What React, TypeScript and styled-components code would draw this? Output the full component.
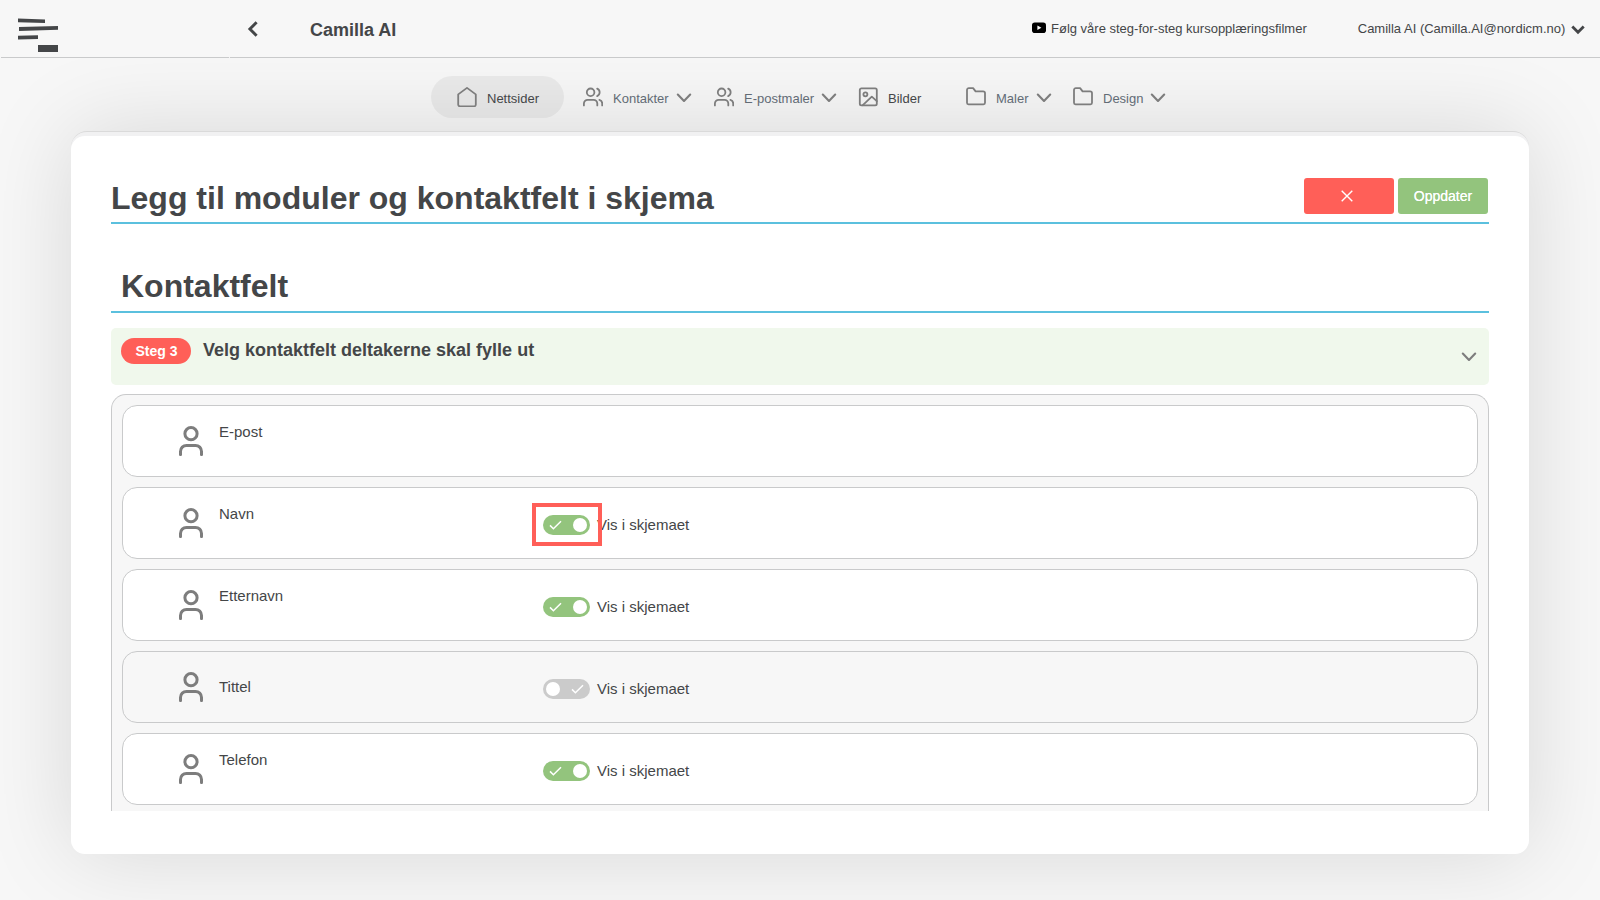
import React from "react";
import styled, { createGlobalStyle } from "styled-components";

const Global = createGlobalStyle`
  * { box-sizing: border-box; }
  body {
    margin: 0;
    background: #f7f7f7;
    color: #444648;
    font-family: "Liberation Sans", Arial, sans-serif;
    overflow: hidden;
  }
`;

const Page = styled.div`
  display: flex;
  flex-direction: column;
  width: 1600px;
  height: 900px;
  overflow: hidden;
`;

const Header = styled.header`
  display: flex;
  align-items: center;
  height: 58px;
  flex: none;
  padding-bottom: 1px;
  background: linear-gradient(90deg, #f7f7f7 1px, #c9cacb 1px 229px, #f1f1f1 229px 230px, #c9cacb 230px) bottom / 100% 1px
    no-repeat, #f7f7f7;
  z-index: 1;
`;

const Logo = styled.svg`
  width: 44px;
  height: 40px;
  margin: 14px 0 0 16px;
  align-self: flex-start;
`;

const Back = styled.svg`
  width: 12px;
  height: 18px;
  margin: 1px 0 0 187px;
`;

const Account = styled.h2`
  margin: 3px 0 0 51px;
  width: 723px;
  font-size: 18px;
  line-height: 22px;
  font-weight: 700;
`;

const TopLink = styled.a<{ $left?: number }>`
  display: flex;
  align-items: center;
  margin-left: ${(p) => p.$left ?? 0}px;
  font-size: 13px;
  line-height: 16px;
  white-space: nowrap;
`;

const Video = styled.svg`
  width: 14px;
  height: 12px;
  margin: -1px 5px 0 -1px;
`;

const AccountArrow = styled.svg`
  width: 14px;
  height: 10px;
  margin: 2px 0 0 6px;
`;

const Nav = styled.nav`
  display: flex;
  height: 42px;
  flex: none;
  margin: 18px 0 13px 431px;
  z-index: 1;
`;

const NavItem = styled.a<{ $width: number; $active?: boolean; $muted?: boolean }>`
  display: flex;
  align-items: center;
  width: ${(p) => p.$width}px;
  height: 42px;
  padding-left: ${(p) => (p.$active ? 26 : 0)}px;
  margin-right: ${(p) => (p.$active ? 19 : 0)}px;
  border-radius: 21px;
  background: ${(p) => (p.$active ? "rgba(0,0,0,.05)" : "transparent")};
  color: ${(p) => (p.$muted ? "#626b75" : "#444648")};
  font-size: 13px;
  line-height: 16px;
  white-space: nowrap;
`;

const NavIcon = styled.svg`
  width: 20px;
  height: 20px;
  margin-right: 10px;
  flex: none;
  fill: none;
  stroke: #7d7d7d;
  stroke-width: 1.8;
  stroke-linecap: round;
  stroke-linejoin: round;
`;

const NavLabel = styled.span`
  padding-top: 3px;
`;

const Chevron = styled.svg`
  width: 16px;
  height: 10px;
  fill: none;
  stroke: #7d7d7d;
  stroke-width: 2.1;
  stroke-linecap: round;
  stroke-linejoin: round;
`;

const NavChevron = styled(Chevron)`
  margin: 2px 0 0 7px;
`;

const Backing = styled.div`
  margin: 0 71px;
  height: 723px;
  flex: none;
  padding-top: 4px;
  border-top: 1px solid #dadada;
  border-radius: 16px;
  background: #f1f1f2;
  box-shadow: 0 0 90px rgba(0, 0, 0, 0.13);
`;

const Card = styled.main`
  height: 718px;
  padding: 42px 40px 0;
  background: #fff;
  border-radius: 14px;
`;

const TitleBar = styled.div`
  display: flex;
  justify-content: space-between;
  height: 46px;
  border-bottom: 2px solid #5bc0de;
`;

const Title = styled.h1`
  margin: 0;
  padding-top: 1px;
  font-size: 32px;
  line-height: 38px;
  font-weight: 700;
`;

const Actions = styled.div`
  display: flex;
  gap: 4px;
  padding-right: 1px;
`;

const Button = styled.button<{ $color: string }>`
  display: flex;
  align-items: center;
  justify-content: center;
  width: 90px;
  height: 36px;
  padding: 0;
  border: 0;
  border-radius: 3px;
  background: ${(p) => p.$color};
  color: #fff;
  font: 14px/18px "Liberation Sans", Arial, sans-serif;
  text-shadow: 0 0 0.6px #fff;
`;

const Cross = styled.svg`
  width: 12px;
  height: 12px;
  margin: -1px 5px 0 0;
`;

const SectionTitle = styled.h1`
  margin: 42px 0 15px;
  height: 47px;
  padding: 1px 10px 0;
  border-bottom: 2px solid #5bc0de;
  font-size: 32px;
  line-height: 38px;
  font-weight: 700;
`;

const Step = styled.section`
  display: flex;
  align-items: flex-start;
  height: 57px;
  margin-bottom: 9px;
  padding: 10px 12px 0 10px;
  border-radius: 5px;
  background: #f0f8ec;
`;

const Badge = styled.span`
  width: 70px;
  height: 26px;
  margin-right: 12px;
  padding-left: 1px;
  border-radius: 13px;
  background: #ff5f58;
  color: #fff;
  font-size: 14px;
  line-height: 27px;
  font-weight: 700;
  text-align: center;
`;

const StepTitle = styled.h3`
  flex: 1;
  margin: 1px 0 0;
  font-size: 18px;
  line-height: 22px;
  font-weight: 700;
`;

const StepChevron = styled(Chevron)`
  margin-top: 14px;
`;

const List = styled.div`
  display: flex;
  flex-direction: column;
  gap: 10px;
  height: 417px;
  overflow: hidden;
  padding: 10px 10px 0;
  border: 1px solid #c9cacb;
  border-bottom: 0;
  border-radius: 15px 15px 0 0;
  background: #f7f7f7;
`;

const Row = styled.div<{ $off?: boolean }>`
  display: flex;
  height: 72px;
  flex: none;
  padding-left: 56px;
  border: 1px solid #c9cacb;
  border-radius: 15px;
  background: ${(p) => (p.$off ? "#f7f7f7" : "#fff")};
  font-size: 15px;
  line-height: 18px;
`;

const Person = styled.svg`
  width: 24px;
  height: 30px;
  margin: 20px 16px 0 0;
  fill: none;
  stroke: #7d7d7d;
  stroke-width: 3;
  stroke-linecap: round;
`;

const FieldName = styled.span<{ $off?: boolean }>`
  width: 324px;
  padding-top: ${(p) => (p.$off ? 26 : 17)}px;
`;

const Visibility = styled.label`
  position: relative;
  display: flex;
  align-items: center;
  gap: 7px;
  height: 20px;
  margin-top: 27px;
`;

const Track = styled.span<{ $on: boolean }>`
  display: flex;
  flex-direction: ${(p) => (p.$on ? "row" : "row-reverse")};
  align-items: center;
  justify-content: space-between;
  width: 47px;
  height: 20px;
  padding: ${(p) => (p.$on ? "0 3px 0 6px" : "0 6px 0 3px")};
  border-radius: 10px;
  background: ${(p) => (p.$on ? "#93c47d" : "#cbcbcb")};
`;

const Knob = styled.span`
  width: 14px;
  height: 14px;
  border-radius: 50%;
  background: #fff;
`;

const Tick = styled.svg`
  width: 13px;
  height: 10px;
`;

const Highlight = styled.span`
  position: absolute;
  left: -11px;
  top: -12px;
  width: 70px;
  height: 43px;
  border: 4px solid #ff5f58;
`;

const icons: Record<string, React.ReactNode> = {
  home: <path d="M1.2 7.4 10 .9l8.8 6.5v10.2a1.7 1.7 0 0 1-1.7 1.7H2.9a1.7 1.7 0 0 1-1.7-1.7z" />,
  users: (
    <>
      <circle cx="7.6" cy="5.3" r="3.8" />
      <path d="M.9 18.4v-1.8a3.8 3.8 0 0 1 3.8-3.8h5.8a3.8 3.8 0 0 1 3.8 3.8v1.8" />
      <path d="M14.2 1.6a4.1 4.1 0 0 1 0 7.5M16.4 12.9a3.6 3.6 0 0 1 2.8 3.5v2" />
    </>
  ),
  image: (
    <>
      <rect x="1.8" y="1.3" width="17" height="17" rx="1.6" />
      <circle cx="7.4" cy="7.3" r="2" />
      <path d="m4.8 18.2 9-8.6 5 4.6" />
    </>
  ),
  folder: <path d="M1 15.8V3a1.9 1.9 0 0 1 1.9-1.9h4.2l2.5 3.3h7.5A1.9 1.9 0 0 1 19 6.3v9.5a1.5 1.5 0 0 1-1.5 1.5h-15A1.5 1.5 0 0 1 1 15.8z" />,
};

const nav = [
  { icon: "home", label: "Nettsider", width: 133, active: true },
  { icon: "users", label: "Kontakter", width: 131, menu: true },
  { icon: "users", label: "E-postmaler", width: 144, menu: true },
  { icon: "image", label: "Bilder", width: 108 },
  { icon: "folder", label: "Maler", width: 107, menu: true },
  { icon: "folder", label: "Design", width: 95, menu: true },
];

const fields: { name: string; on?: boolean; marked?: boolean }[] = [
  { name: "E-post" },
  { name: "Navn", on: true, marked: true },
  { name: "Etternavn", on: true },
  { name: "Tittel", on: false },
  { name: "Telefon", on: true },
];

const down = <path d="m1.8 1.6 6.2 6.4 6.2-6.4" />;

export default function App() {
  return (
    <Page>
      <Global />
      <Header>
        <Logo viewBox="0 0 44 40" fill="#444648">
          <path d="m2 4.5 27 .9v3.6L2 8.2zM3 13l39-1v3.8L3 17zM2 21.8l20-.5V25l-20 .6zM22 31h20v7H22z" />
        </Logo>
        <Back viewBox="0 0 12 18" fill="none" stroke="#444648" strokeWidth="2.9">
          <path d="M9.6 2.3 2.9 9l6.7 6.7" />
        </Back>
        <Account>Camilla AI</Account>
        <TopLink>
          <Video viewBox="0 0 14 12">
            <rect y="0.5" width="14" height="10.5" rx="2.8" />
            <path d="m5.4 3.6 4 2.2-4 2.2z" fill="#fff" />
          </Video>
          Følg våre steg-for-steg kursopplæringsfilmer
        </TopLink>
        <TopLink $left={51}>
          Camilla AI (Camilla.AI@nordicm.no)
          <AccountArrow viewBox="0 0 14 10" fill="none" stroke="#444648" strokeWidth="2.8">
            <path d="m1.3 1.6 5.7 5.7 5.7-5.7" />
          </AccountArrow>
        </TopLink>
      </Header>
      <Nav>
        {nav.map((n) => (
          <NavItem key={n.label} $width={n.width} $active={n.active} $muted={n.menu}>
            <NavIcon viewBox="0 0 20 20">{icons[n.icon]}</NavIcon>
            <NavLabel>{n.label}</NavLabel>
            {n.menu && <NavChevron viewBox="0 0 16 10">{down}</NavChevron>}
          </NavItem>
        ))}
      </Nav>
      <Backing>
        <Card>
          <TitleBar>
            <Title>Legg til moduler og kontaktfelt i skjema</Title>
            <Actions>
              <Button $color="#ff5f58">
                <Cross viewBox="0 0 12 12" fill="none" stroke="#fff" strokeWidth="1.4">
                  <path d="m.7.7 10.6 10.6M11.3.7.7 11.3" />
                </Cross>
              </Button>
              <Button $color="#93c47d">Oppdater</Button>
            </Actions>
          </TitleBar>
          <SectionTitle>Kontaktfelt</SectionTitle>
          <Step>
            <Badge>Steg 3</Badge>
            <StepTitle>Velg kontaktfelt deltakerne skal fylle ut</StepTitle>
            <StepChevron viewBox="0 0 16 10">{down}</StepChevron>
          </Step>
          <List>
            {fields.map((f) => (
              <Row key={f.name} $off={f.on === false}>
                <Person viewBox="0 0 24 30">
                  <circle cx="12" cy="7.7" r="6.1" />
                  <path d="M1.5 28.6v-3.2a6 6 0 0 1 6-6h9a6 6 0 0 1 6 6v3.2" />
                </Person>
                <FieldName $off={f.on === false}>{f.name}</FieldName>
                {f.on !== undefined && (
                  <Visibility>
                    <Track $on={f.on}>
                      <Tick viewBox="0 0 13 10" fill="none" stroke="#fff" strokeWidth="1.5">
                        <path d="m1 5.4 3.4 3.4L12 1.2" />
                      </Tick>
                      <Knob />
                    </Track>
                    Vis i skjemaet
                    {f.marked && <Highlight />}
                  </Visibility>
                )}
              </Row>
            ))}
          </List>
        </Card>
      </Backing>
    </Page>
  );
}
